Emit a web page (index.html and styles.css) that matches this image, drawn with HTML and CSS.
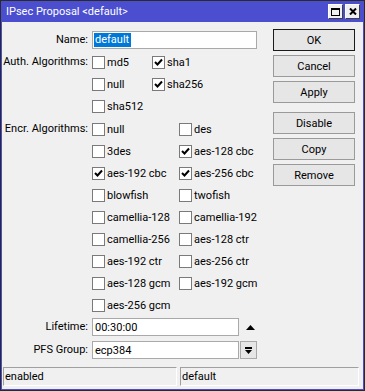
FILE: index.html
```html
<!DOCTYPE html>
<html lang="en">
  <head>
    <meta charset="UTF-8" />
    <meta name="viewport" content="width=device-width, initial-scale=1.0" />
    <title>IPsec Proposal &lt;default&gt;</title>
    <link rel="stylesheet" href="styles.css">
  </head>
  <body>
    <div class="window">
      <!-- title bar -->
      <div class="titlebar">
        <span class="title">IPsec Proposal &lt;default&gt;</span>
        <div class="win-buttons">
          <span class="win-btn">
            <svg width="9" height="8" viewBox="0 0 9 8"><rect x="0.5" y="1" width="8" height="6.5" fill="none" stroke="#000" stroke-width="1"/><rect x="0" y="0" width="9" height="2" fill="#000"/></svg>
          </span>
          <span class="win-btn">
            <svg width="8" height="7" viewBox="0 0 8 7"><path d="M1 0.5 L7 6.5 M7 0.5 L1 6.5" stroke="#000" stroke-width="2"/></svg>
          </span>
        </div>
      </div>

      <div class="content">
        <div class="main">
          <div class="form">
            <div class="row">
              <span class="label">Name:</span>
              <div class="field">
                <div class="input name-input"><span class="selected">default</span></div>
              </div>
            </div>

            <!-- Auth -->
            <div class="row">
              <span class="label">Auth. Algorithms:</span>
              <div class="checks auth">
                <span class="cb"><span class="box"></span>md5</span>
                <span class="cb"><span class="box checked"><svg width="9" height="9" viewBox="0 0 9 9"><polyline points="1,4 3.5,6.5 8,1.5" fill="none" stroke="#000" stroke-width="2"/></svg></span>sha1</span>
                <span class="cb"><span class="box"></span>null</span>
                <span class="cb"><span class="box checked"><svg width="9" height="9" viewBox="0 0 9 9"><polyline points="1,4 3.5,6.5 8,1.5" fill="none" stroke="#000" stroke-width="2"/></svg></span>sha256</span>
                <span class="cb"><span class="box"></span>sha512</span>
              </div>
            </div>

            <!-- Encr -->
            <div class="row encr-row">
              <span class="label">Encr. Algorithms:</span>
              <div class="checks encr">
                <span class="cb"><span class="box"></span>null</span>
                <span class="cb"><span class="box"></span>des</span>
                <span class="cb"><span class="box"></span>3des</span>
                <span class="cb"><span class="box checked"><svg width="9" height="9" viewBox="0 0 9 9"><polyline points="1,4 3.5,6.5 8,1.5" fill="none" stroke="#000" stroke-width="2"/></svg></span>aes-128 cbc</span>
                <span class="cb"><span class="box checked"><svg width="9" height="9" viewBox="0 0 9 9"><polyline points="1,4 3.5,6.5 8,1.5" fill="none" stroke="#000" stroke-width="2"/></svg></span>aes-192 cbc</span>
                <span class="cb"><span class="box checked"><svg width="9" height="9" viewBox="0 0 9 9"><polyline points="1,4 3.5,6.5 8,1.5" fill="none" stroke="#000" stroke-width="2"/></svg></span>aes-256 cbc</span>
                <span class="cb"><span class="box"></span>blowfish</span>
                <span class="cb"><span class="box"></span>twofish</span>
                <span class="cb"><span class="box"></span>camellia-128</span>
                <span class="cb"><span class="box"></span>camellia-192</span>
                <span class="cb"><span class="box"></span>camellia-256</span>
                <span class="cb"><span class="box"></span>aes-128 ctr</span>
                <span class="cb"><span class="box"></span>aes-192 ctr</span>
                <span class="cb"><span class="box"></span>aes-256 ctr</span>
                <span class="cb"><span class="box"></span>aes-128 gcm</span>
                <span class="cb"><span class="box"></span>aes-192 gcm</span>
                <span class="cb"><span class="box"></span>aes-256 gcm</span>
              </div>
            </div>

            <div class="row">
              <span class="label">Lifetime:</span>
              <div class="field">
                <div class="input short-input">00:30:00</div>
                <span class="up-arrow">
                  <svg width="9" height="5" viewBox="0 0 9 5"><path d="M0 5 L4.5 0 L9 5 Z" fill="#000"/></svg>
                </span>
              </div>
            </div>

            <div class="row pfs-row">
              <span class="label">PFS Group:</span>
              <div class="field">
                <div class="input short-input">ecp384</div>
                <span class="drop-btn">
                  <svg width="7" height="7" viewBox="0 0 7 7"><rect x="0" y="0" width="7" height="2" fill="#000"/><path d="M0 3 H7 L3.5 7 Z" fill="#000"/></svg>
                </span>
              </div>
            </div>
          </div>

          <!-- buttons -->
          <div class="actions">
            <button class="btn default">OK</button>
            <button class="btn">Cancel</button>
            <button class="btn">Apply</button>
            <button class="btn spaced">Disable</button>
            <button class="btn">Copy</button>
            <button class="btn">Remove</button>
          </div>
        </div>

        <div class="statusbar">
          <div class="panel">enabled</div>
          <div class="panel">default</div>
        </div>
      </div>
    </div>
  </body>
</html>
```

FILE: styles.css
```css
body {
  margin: 0;
  font-family: Roboto, "Liberation Sans", sans-serif;
  font-size: 11px;
  color: #000;
  background: #fff;
}

.window {
  width: 365px;
  height: 391px;
  box-sizing: border-box;
  border: 1px solid #2a2a2a;
  padding: 0 1px 1px;
  background: #4b4fcf;
  display: flex;
  flex-direction: column;
}

/* title bar */
.titlebar {
  height: 21px;
  flex: none;
  display: flex;
  align-items: center;
  justify-content: space-between;
  padding: 0 3px 0 4px;
  color: #fff;
}

.win-buttons {
  display: flex;
  gap: 2px;
}

.win-btn {
  width: 15px;
  height: 15px;
  box-sizing: border-box;
  background: #f0f0f0;
  border: 1px solid;
  border-color: #fff #404040 #404040 #fff;
  display: flex;
  align-items: center;
  justify-content: center;
}

/* body */
.content {
  flex: 1;
  background: #f0f0f0;
  display: flex;
  flex-direction: column;
}

.main {
  display: flex;
  padding-top: 7px;
}

.form {
  width: 262px;
}

.row {
  display: flex;
  align-items: flex-start;
}

.encr-row {
  margin-top: 1px;
}

.pfs-row {
  margin-top: 1px;
}

.label {
  flex: none;
  width: 86px;
  height: 22px;
  line-height: 22px;
  margin-right: 4px;
  text-align: right;
  white-space: nowrap;
}

.field {
  height: 22px;
  display: flex;
  align-items: center;
}

.input {
  height: 18px;
  box-sizing: border-box;
  border: 1px solid #a9a9a9;
  background: #fff;
  padding-left: 2px;
  display: flex;
  align-items: center;
  white-space: nowrap;
}

.name-input {
  width: 165px;
  padding-left: 1px;
}

.short-input {
  width: 147px;
}

.selected {
  background: #0078d7;
  color: #fff;
  line-height: 14px;
  padding: 0 2px 0 1px;
}

.up-arrow {
  margin-left: 7px;
  display: flex;
}

.drop-btn {
  width: 17px;
  height: 18px;
  box-sizing: border-box;
  margin-left: 1px;
  border: 1px solid #a9a9a9;
  background: #e6e6e6;
  display: flex;
  align-items: center;
  justify-content: center;
}

/* checkboxes */
.checks {
  display: grid;
  grid-auto-rows: 22px;
}

.checks.auth {
  grid-template-columns: 60px 60px;
}

.checks.encr {
  grid-template-columns: 87px 87px;
}

.cb {
  display: flex;
  align-items: center;
  white-space: nowrap;
}

.box {
  flex: none;
  width: 13px;
  height: 13px;
  box-sizing: border-box;
  border: 1px solid #7a7a7a;
  background: #fff;
  margin-right: 2px;
  display: flex;
  align-items: center;
  justify-content: center;
}

/* buttons */
.actions {
  margin-left: auto;
  margin-right: 8px;
  width: 82px;
  display: flex;
  flex-direction: column;
  gap: 4px;
}

.btn {
  height: 22px;
  padding: 0;
  font-family: inherit;
  font-size: 11px;
  color: #000;
  background: #e6e6e6;
  border: 1px solid #9a9a9a;
}

.btn.default {
  border-color: #1a1a1a;
}

.btn.spaced {
  margin-top: 5px;
}

/* status bar */
.statusbar {
  margin-top: auto;
  margin-bottom: 3px;
  display: grid;
  grid-template-columns: 174px 1fr;
  gap: 3px;
  padding: 0 4px 0 1px;
}

.panel {
  height: 19px;
  box-sizing: border-box;
  border: 1px solid;
  border-color: #a0a0a0 #fff #fff #a0a0a0;
  padding-left: 1px;
  line-height: 17px;
}
```
